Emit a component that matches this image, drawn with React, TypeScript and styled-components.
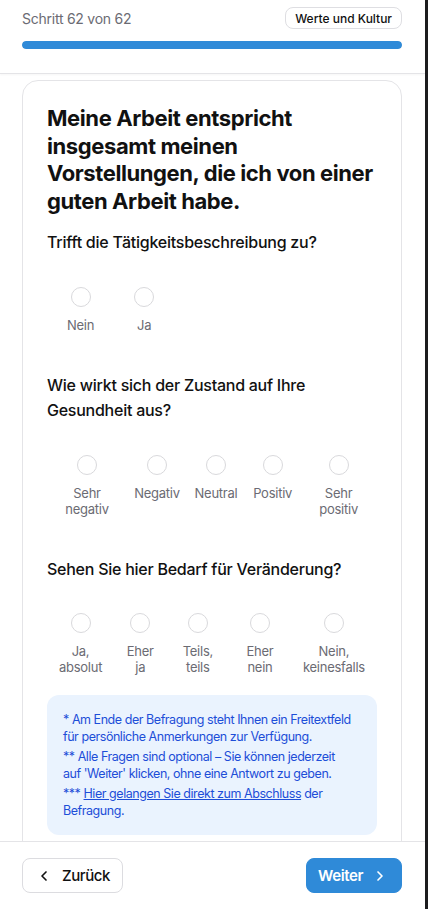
import styled, { createGlobalStyle } from 'styled-components';
import { ChevronLeft, ChevronRight } from 'lucide-react';

const GlobalStyle = createGlobalStyle`
  html, body {
    margin: 0;
    padding: 0;
    height: 100%;
    background: #1c1c1e;
  }
  body {
    font-family: Inter, "Noto Sans", sans-serif;
    letter-spacing: -0.25px;
    -webkit-font-smoothing: antialiased;
  }
  #root {
    height: 100%;
  }
  * {
    box-sizing: border-box;
  }
`;

const Page = styled.div`
  width: 425px;
  height: 909px;
  background: #fff;
  display: flex;
  flex-direction: column;
  overflow: hidden;
`;

const Header = styled.header`
  flex-shrink: 0;
  padding: 7px 23px 24px 22px;
  border-bottom: 1px solid #e4e4e7;
  box-shadow: 0 1px 2px rgba(0, 0, 0, 0.04);
`;

const HeaderTop = styled.div`
  display: flex;
  justify-content: space-between;
  align-items: center;
  height: 22px;
`;

const StepText = styled.span`
  font-size: 14px;
  color: #6b6b73;
`;

const Badge = styled.span`
  display: inline-flex;
  align-items: center;
  height: 22px;
  padding: 0 9px;
  border: 1px solid #dedee2;
  border-radius: 8px;
  font-size: 12px;
  font-weight: 500;
  color: #111;
  letter-spacing: 0;
`;

const Progress = styled.div`
  margin-top: 12px;
  height: 8px;
  border-radius: 4px;
  background: #e5e7eb;
  overflow: hidden;
`;

const ProgressFill = styled.div`
  height: 100%;
  border-radius: 4px;
  background: #2f8ad8;
`;

const Main = styled.main`
  flex: 1;
  overflow: hidden;
  padding: 6px 23px 0 22px;
`;

const Card = styled.section`
  background: #fff;
  border: 1px solid #e4e4e7;
  border-radius: 16px;
  padding: 24px;
`;

const Title = styled.h1`
  margin: 0 0 15px;
  font-size: 22px;
  line-height: 27.5px;
  font-weight: 700;
  color: #111;
  letter-spacing: -0.4px;
`;

const Block = styled.div<{ $first?: boolean }>`
  margin-top: ${(p) => (p.$first ? '0' : '40px')};
`;

const Question = styled.h2`
  margin: 0;
  font-size: 16px;
  line-height: 25.6px;
  font-weight: 500;
  color: #111;
`;

const OptionRow = styled.div`
  display: flex;
  margin-top: 31px;
`;

// binary questions get more room around each answer, scales are packed tighter
const Option = styled.label<{ $binary?: boolean }>`
  flex: 0 1 auto;
  min-width: 0;
  padding: ${(p) => (p.$binary ? '0 20px' : '0 14px')};
  display: flex;
  flex-direction: column;
  align-items: center;
  gap: 10px;
  cursor: pointer;
`;

const Radio = styled.span`
  width: 20px;
  height: 20px;
  flex-shrink: 0;
  border-radius: 50%;
  border: 1.5px solid #d9d9dc;
  background: #fff;
`;

const OptionLabel = styled.span`
  font-size: 13px;
  line-height: 16px;
  color: #6b6b73;
  text-align: center;
`;

const InfoBox = styled.div`
  margin-top: 20px;
  background: #eaf3fe;
  border-radius: 12px;
  padding: 16px 14px 16px 16px;
  display: flex;
  flex-direction: column;
  gap: 3px;
`;

const InfoText = styled.p`
  margin: 0;
  font-size: 12.5px;
  line-height: 17px;
  color: #1d4ed8;
  letter-spacing: -0.45px;
`;

const InfoLink = styled.a`
  color: inherit;
  text-decoration: underline;
  cursor: pointer;
`;

const Footer = styled.footer`
  flex-shrink: 0;
  display: flex;
  justify-content: space-between;
  align-items: center;
  padding: 16px 23px 16px 22px;
  border-top: 1px solid #e4e4e7;
  background: #fff;
`;

const NavButton = styled.button<{ $primary?: boolean }>`
  display: inline-flex;
  align-items: center;
  height: 35px;
  gap: ${(p) => (p.$primary ? '9px' : '10px')};
  padding: ${(p) => (p.$primary ? '0 13px 0 11px' : '0 12px 0 13px')};
  border-radius: 8px;
  border: 1px solid ${(p) => (p.$primary ? '#2f8ad8' : '#dcdce0')};
  background: ${(p) => (p.$primary ? '#2f8ad8' : '#fff')};
  color: ${(p) => (p.$primary ? '#fff' : '#111')};
  font-family: inherit;
  font-size: 15px;
  font-weight: ${(p) => (p.$primary ? 600 : 500)};
  letter-spacing: -0.4px;
  cursor: pointer;
`;

const questions = [
  { q: 'Trifft die Tätigkeitsbeschreibung zu?', options: ['Nein', 'Ja'] },
  {
    q: 'Wie wirkt sich der Zustand auf Ihre Gesundheit aus?',
    options: ['Sehr negativ', 'Negativ', 'Neutral', 'Positiv', 'Sehr positiv'],
  },
  {
    q: 'Sehen Sie hier Bedarf für Veränderung?',
    options: ['Ja, absolut', 'Eher ja', 'Teils, teils', 'Eher nein', 'Nein, keinesfalls'],
  },
];

export default function App() {
  const progress = 62 / 62;

  return (
    <>
      <GlobalStyle />
      <Page>
        <Header>
          <HeaderTop>
            <StepText>Schritt 62 von 62</StepText>
            <Badge>Werte und Kultur</Badge>
          </HeaderTop>
          <Progress>
            <ProgressFill style={{ width: `${progress * 100}%` }} />
          </Progress>
        </Header>

        <Main>
          <Card>
            <Title>
              Meine Arbeit entspricht insgesamt meinen Vorstellungen, die ich von einer guten Arbeit
              habe.
            </Title>

            {questions.map((item, i) => (
              <Block key={item.q} $first={i === 0}>
                <Question>{item.q}</Question>
                <OptionRow>
                  {item.options.map((opt) => (
                    <Option key={opt} $binary={item.options.length === 2}>
                      <Radio />
                      <OptionLabel>{opt}</OptionLabel>
                    </Option>
                  ))}
                </OptionRow>
              </Block>
            ))}

            <InfoBox>
              <InfoText>
                * Am Ende der Befragung steht Ihnen ein Freitextfeld für persönliche Anmerkungen zur
                Verfügung.
              </InfoText>
              <InfoText>
                ** Alle Fragen sind optional – Sie können jederzeit auf{'\u00a0'}'Weiter' klicken,
                ohne eine Antwort zu geben.
              </InfoText>
              <InfoText>
                *** <InfoLink>Hier gelangen Sie direkt zum Abschluss</InfoLink> der Befragung.
              </InfoText>
            </InfoBox>
          </Card>
        </Main>

        <Footer>
          <NavButton>
            <ChevronLeft size={16} strokeWidth={2.5} />
            Zurück
          </NavButton>
          <NavButton $primary>
            Weiter
            <ChevronRight size={16} strokeWidth={2.5} />
          </NavButton>
        </Footer>
      </Page>
    </>
  );
}
